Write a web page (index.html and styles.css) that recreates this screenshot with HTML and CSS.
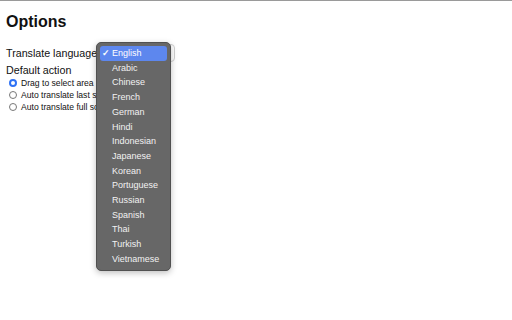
FILE: index.html
```html
<!DOCTYPE html>
<html lang="en">
<head>
    <meta charset="UTF-8">
    <title>Options</title>
    <link rel="stylesheet" href="styles.css">
</head>
<body>
    <div class="page">
        <h1 class="title">Options</h1>

        <div class="field">
            <span class="field-label">Translate language</span>
            <div class="select-box"></div>
        </div>

        <div class="group">
            <div class="field-label">Default action</div>
            <label class="radio-row">
                <span class="radio checked"></span>
                <span>Drag to select area</span>
            </label>
            <label class="radio-row">
                <span class="radio"></span>
                <span>Auto translate last screenshot</span>
            </label>
            <label class="radio-row">
                <span class="radio"></span>
                <span>Auto translate full screen</span>
            </label>
        </div>
    </div>

    <!-- open language menu -->
    <ul class="menu">
        <li class="menu-item selected"><span class="check">&#10003;</span>English</li>
        <li class="menu-item">Arabic</li>
        <li class="menu-item">Chinese</li>
        <li class="menu-item">French</li>
        <li class="menu-item">German</li>
        <li class="menu-item">Hindi</li>
        <li class="menu-item">Indonesian</li>
        <li class="menu-item">Japanese</li>
        <li class="menu-item">Korean</li>
        <li class="menu-item">Portuguese</li>
        <li class="menu-item">Russian</li>
        <li class="menu-item">Spanish</li>
        <li class="menu-item">Thai</li>
        <li class="menu-item">Turkish</li>
        <li class="menu-item">Vietnamese</li>
    </ul>
</body>
</html>
```

FILE: styles.css
```css
* {
    margin: 0;
    padding: 0;
    box-sizing: border-box;
}

body {
    font-family: "Liberation Sans", Arial, sans-serif;
    color: #111;
    background: white;
    border-top: 1px solid #9a9a9a;
    height: 320px;
    overflow: hidden;
    position: relative;
}

.page {
    padding: 11px 6px;
}

.title {
    font-size: 16px;
    font-weight: bold;
    line-height: 20px;
    margin-bottom: 12px;
}

.field {
    display: flex;
    align-items: center;
    gap: 2px;
    height: 18px;
}

.field-label {
    font-size: 10.7px;
    line-height: 14px;
}

.select-box {
    width: 76px;
    height: 18px;
    border: 1px solid #d0d0d0;
    border-radius: 4px;
    background: #fff;
}

.group {
    margin-top: 1px;
}

.radio-row {
    display: flex;
    align-items: center;
    gap: 4px;
    height: 12px;
    font-size: 8.6px;
    padding-left: 3px;
}

.radio {
    width: 8px;
    height: 8px;
    border: 1px solid #777;
    border-radius: 50%;
    background: #fff;
    flex-shrink: 0;
}

.radio.checked {
    border: 2.5px solid #2f72f5;
    background: #fff;
}

/* Dropdown menu */
.menu {
    position: absolute;
    left: 96px;
    top: 41px;
    width: 75px;
    padding: 3px 3px;
    list-style: none;
    background: #676767;
    border: 1px solid #505050;
    border-radius: 5px;
    box-shadow: 0 2px 6px rgba(0, 0, 0, 0.25);
}

.menu-item {
    font-size: 9px;
    line-height: 14.7px;
    color: #f2f2f2;
    padding-left: 12px;
    border-radius: 3px;
    position: relative;
}

.menu-item.selected {
    background: #5d87ee;
    color: #fff;
}

.check {
    position: absolute;
    left: 2px;
    top: 0;
    font-size: 9px;
    font-weight: bold;
}
```
